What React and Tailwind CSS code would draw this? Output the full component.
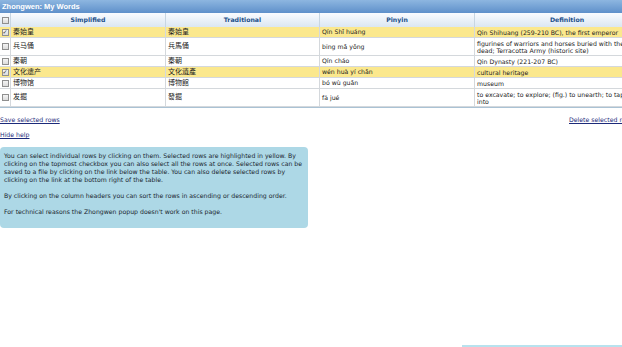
import React from "react";

const rows = [
  { s: "秦始皇", t: "秦始皇", p: "Qín Shǐ huáng", d: ["Qin Shihuang (259-210 BC), the first emperor"], sel: true },
  { s: "兵马俑", t: "兵馬俑", p: "bīng mǎ yǒng", d: ["figurines of warriors and horses buried with the", "dead; Terracotta Army (historic site)"], sel: false },
  { s: "秦朝", t: "秦朝", p: "Qín cháo", d: ["Qin Dynasty (221-207 BC)"], sel: false },
  { s: "文化遗产", t: "文化遺產", p: "wén huà yí chǎn", d: ["cultural heritage"], sel: true },
  { s: "博物馆", t: "博物館", p: "bó wù guǎn", d: ["museum"], sel: false },
  { s: "发掘", t: "發掘", p: "fā jué", d: ["to excavate; to explore; (fig.) to unearth; to tap", "into"], sel: false },
];

function Box({ checked }) {
  return (
    <span className="inline-flex items-center justify-center w-[7px] h-[7px] border border-[#8f8f8f] bg-gradient-to-b from-[#f4f4f4] to-[#dcdcdc] text-[6px] leading-none text-[#333]">
      {checked ? "✓" : ""}
    </span>
  );
}

export default function App() {
  const font = { fontFamily: '"DejaVu Sans", "Noto Sans CJK SC", sans-serif' };
  return (
    <div className="w-[622px] h-[347px] overflow-hidden bg-white flex flex-col text-[6.2px] text-[#222]" style={font}>
      <div className="w-[660px]">
        <div className="h-[13px] bg-gradient-to-b from-[#8db6e0] to-[#5f90ca] text-white font-bold text-[7.5px] leading-[13px] pl-[2px] font-['Liberation_Sans',sans-serif]">
          Zhongwen: My Words
        </div>
        <div className="grid grid-cols-[11px_155px_154px_155px_185px] border-b border-[#aac2d4]">
          <div className="h-[14px] flex items-center justify-center bg-gradient-to-b from-[#fafcff] to-[#dbe7f2] border-r border-[#c8d6e2]">
            <Box />
          </div>
          {["Simplified", "Traditional", "Pinyin", "Definition"].map((h) => (
            <div key={h} className="h-[14px] flex items-center justify-center font-bold text-[#1b4f8a] bg-gradient-to-b from-[#fafcff] to-[#dbe7f2] border-r border-[#c8d6e2]">
              {h}
            </div>
          ))}
          {rows.map((r, i) => {
            const bg = r.sel ? "bg-[#fbe88d]" : "bg-white";
            const h = r.d.length > 1 ? "h-[18px]" : "h-[11px]";
            const cell = `${bg} ${h} border-b border-r border-[#d4d8dc] flex items-center px-[2px] overflow-hidden whitespace-nowrap`;
            return (
              <React.Fragment key={i}>
                <div className={`${bg} ${h} border-b border-r border-[#d4d8dc] flex items-center justify-center`}>
                  <Box checked={r.sel} />
                </div>
                <div className={`${cell} text-[7px]`}>{r.s}</div>
                <div className={`${cell} text-[7px]`}>{r.t}</div>
                <div className={cell}>{r.p}</div>
                <div className={`${cell} leading-[7px]`}>
                  <span className="block">
                    {r.d.map((l, k) => (
                      <span key={k} className="block">{l}</span>
                    ))}
                  </span>
                </div>
              </React.Fragment>
            );
          })}
        </div>
        <div className="flex mt-[8px] leading-[8px]">
          <a className="underline text-[#1c2a7a] w-[569px] shrink-0">
            <span>Save selected rows</span>
          </a>
          <a className="underline text-[#1c2a7a] whitespace-nowrap">Delete selected rows</a>
        </div>
      </div>
      <a className="underline text-[#1c2a7a] mt-[7px] w-fit leading-[8px]">Hide help</a>
      <div className="mt-[8px] w-[308px] rounded-[4px] bg-[#add8e6] px-[4px] pt-[5px] pb-[12px] leading-[8px] text-[#1a1f2e]">
        <p>
          You can select individual rows by clicking on them. Selected rows are highlighted in yellow. By clicking on the topmost checkbox you can also select all the rows at once. Selected rows can be saved to a file by clicking on the link below the table. You can also delete selected rows by clicking on the link at the bottom right of the table.
        </p>
        <p className="mt-[8px]">By clicking on the column headers you can sort the rows in ascending or descending order.</p>
        <p className="mt-[8px]">For technical reasons the Zhongwen popup doesn't work on this page.</p>
      </div>
      <div className="mt-auto ml-[462px] h-[2px] bg-[#b8e2ee]" />
    </div>
  );
}
